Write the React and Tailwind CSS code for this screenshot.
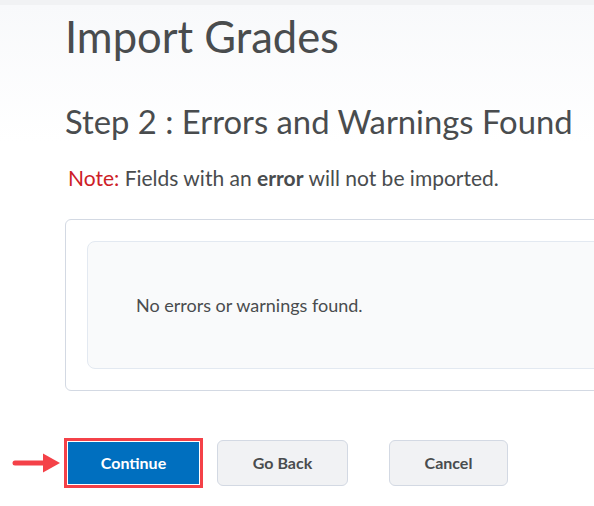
import React from 'react';

const lato = { fontFamily: 'Lato, "Open Sans", sans-serif' };

function ArrowMark() {
  return (
    <svg width="49" height="20" viewBox="0 0 49 20" className="mr-[3px]">
      <line x1="3" y1="10" x2="34" y2="10" stroke="#f44148" strokeWidth="5" strokeLinecap="round" />
      <polygon points="31,0.5 48,10 31,19.5" fill="#f44148" />
    </svg>
  );
}

export default function App() {
  return (
    <div className="w-[594px] h-[506px] overflow-hidden bg-white text-[#494c4e]" style={lato}>
      <div className="h-[5px] bg-[#f1f2f4]" />
      <div className="bg-gradient-to-b from-[#f8f9fb] to-white pl-[65px]">
        <h1 className="pt-[5px] text-[43.5px] leading-[52px] font-normal">Import Grades</h1>
        <h2 className="mt-[40px] text-[32.8px] leading-[40px] font-normal">Step 2 : Errors and Warnings Found</h2>
      </div>
      <div className="pl-[65px]">
        <p className="mt-[24px] pl-[3px] text-[21px] leading-[24px]">
          <span className="text-[#cd2026]">Note:</span> Fields with an <b className="font-bold">error</b> will not be imported.
        </p>
        <div className="mt-[29px] w-[560px] rounded-[6px] border border-[#d3d9e3] p-[21px]">
          <div className="h-[128px] rounded-[8px] border border-[#e3e9f1] bg-[#f9fafb] pl-[48px] flex items-center">
            <span className="text-[18px]">No errors or warnings found.</span>
          </div>
        </div>
      </div>
      <div className="mt-[47px] flex items-center pl-[12px]">
        <ArrowMark />
        <div className="border-[3px] border-[#f44148] p-[1px] bg-white">
          <button className="w-[131px] h-[42px] bg-[#006fbf] text-white text-[16px] font-bold">Continue</button>
        </div>
        <button className="ml-[14px] w-[131px] h-[46px] rounded-[6px] border border-[#d3d9e3] bg-[#f1f2f4] text-[16px] font-bold text-[#494c4e]">Go Back</button>
        <button className="ml-[41px] w-[119px] h-[46px] rounded-[6px] border border-[#d3d9e3] bg-[#f1f2f4] text-[16px] font-bold text-[#494c4e]">Cancel</button>
      </div>
    </div>
  );
}
